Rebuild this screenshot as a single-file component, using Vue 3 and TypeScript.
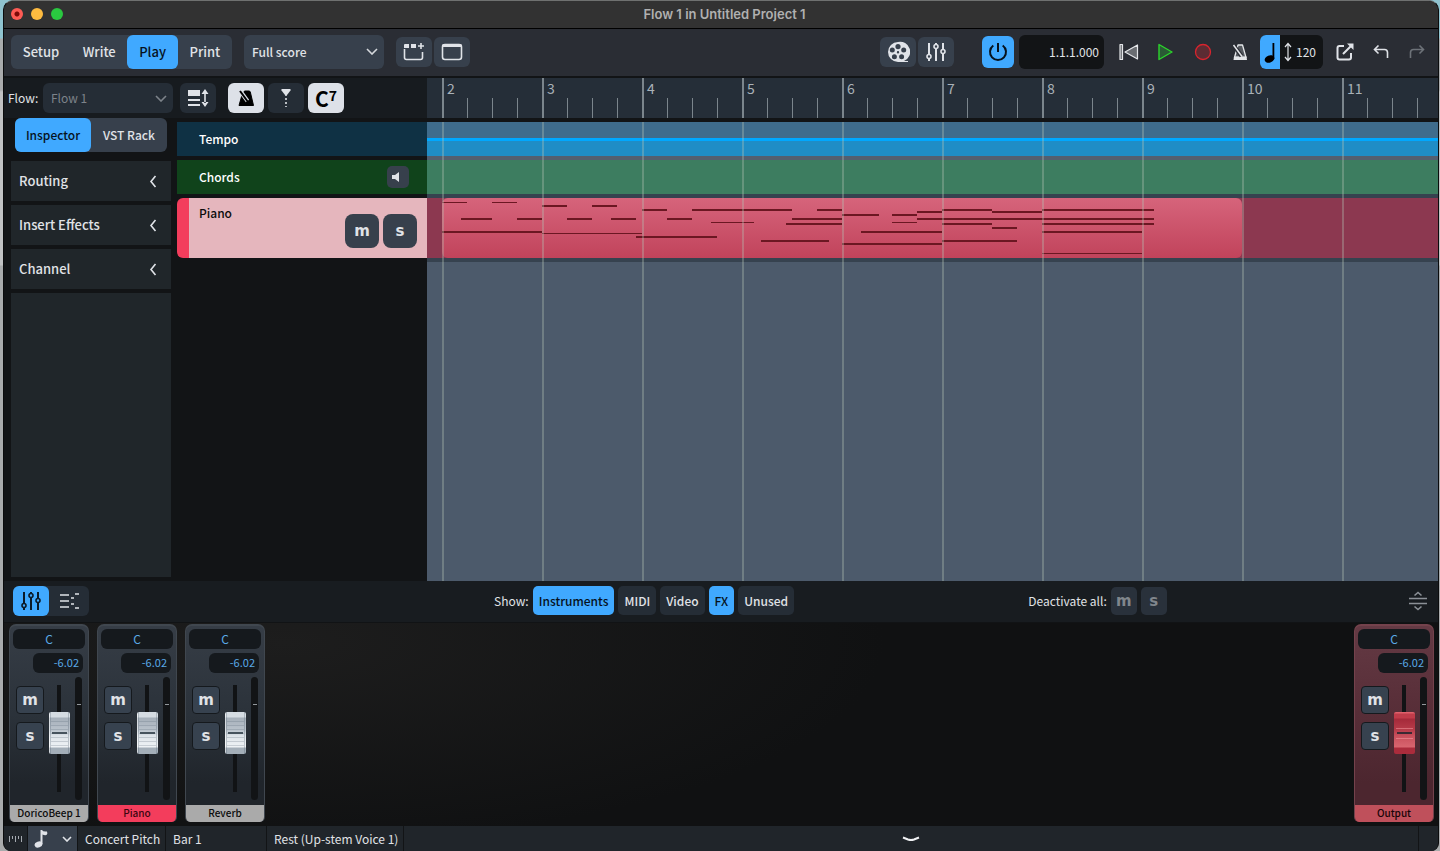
<script setup lang="ts">
import { ref } from 'vue'

interface Note { x: number; w: number; y: number; h?: number }
interface Channel { name: string; pan: string; gain: string; level: number; tone: string }

const modes = ['Setup', 'Write', 'Play', 'Print']
const mode = ref('Play')
const layout = ref('Full score')
const flow = ref('Flow 1')
const panel = ref('Inspector')
const sections = ['Routing', 'Insert Effects', 'Channel']
const bars = [2, 3, 4, 5, 6, 7, 8, 9, 10, 11]
const filters = ref([
  { name: 'Instruments', on: true },
  { name: 'MIDI', on: false },
  { name: 'Video', on: false },
  { name: 'FX', on: true },
  { name: 'Unused', on: false },
])
const channels = ref<Channel[]>([
  { name: 'DoricoBeep 1', pan: 'C', gain: '-6.02', level: 58, tone: 'grey' },
  { name: 'Piano', pan: 'C', gain: '-6.02', level: 58, tone: 'piano' },
  { name: 'Reverb', pan: 'C', gain: '-6.02', level: 58, tone: 'grey' },
  { name: 'Output', pan: 'C', gain: '-6.02', level: 58, tone: 'output' },
])
const notes: Note[] = [
  { x: 0, w: 25, y: 4, h: 1 }, { x: 50, w: 25, y: 4, h: 1 },
  { x: 100, w: 25, y: 7 }, { x: 150, w: 25, y: 7 },
  { x: 200, w: 25, y: 11 }, { x: 250, w: 100, y: 11 }, { x: 375, w: 25, y: 11 },
  { x: 19, w: 31, y: 20 }, { x: 75, w: 25, y: 20 }, { x: 125, w: 25, y: 20 },
  { x: 169, w: 25, y: 20 }, { x: 225, w: 25, y: 20 }, { x: 350, w: 50, y: 20 },
  { x: 269, w: 43, y: 24, h: 1 }, { x: 344, w: 56, y: 25 },
  { x: 0, w: 100, y: 33 }, { x: 100, w: 100, y: 35, h: 1 },
  { x: 194, w: 81, y: 38 }, { x: 319, w: 68, y: 42 },
  { x: 400, w: 37, y: 16 }, { x: 450, w: 25, y: 16 }, { x: 475, w: 25, y: 13 },
  { x: 500, w: 50, y: 11 }, { x: 550, w: 50, y: 13 }, { x: 600, w: 112, y: 11 },
  { x: 475, w: 237, y: 20 }, { x: 450, w: 25, y: 24, h: 1 },
  { x: 500, w: 50, y: 25 }, { x: 600, w: 112, y: 25 }, { x: 550, w: 25, y: 29 },
  { x: 419, w: 81, y: 33 }, { x: 600, w: 100, y: 33 },
  { x: 500, w: 75, y: 42 }, { x: 400, w: 100, y: 45 }, { x: 600, w: 100, y: 55, h: 1 },
]
</script>

<template>
  <div class="desktop">
    <div class="window">
      <header class="titlebar">
        <div class="lights"><i class="close"></i><i class="min"></i><i class="max"></i></div>
        <h1>Flow 1 in Untitled Project 1</h1>
      </header>

      <div class="toolbar">
        <nav class="seg modes" aria-label="Mode">
          <button v-for="m in modes" :key="m" :class="{ on: m === mode }" @click="mode = m">{{ m }}</button>
        </nav>
        <div class="drop layout-drop">
          <select v-model="layout" aria-label="Layout"><option>Full score</option></select>
          <svg width="12" height="7" viewBox="0 0 12 7"><path d="M1 1l5 5 5-5" /></svg>
        </div>
        <div class="pair">
          <button class="tool" aria-label="New window">
            <svg width="24" height="20" viewBox="0 0 24 20"><path class="ln thin" d="M2.500 7v8.500q0 2 2 2h14q2 0 2-2V10" /><path class="fl" d="M2 3q0-1 1-1h4v4H2zM9 2h5v4H9z" /><path class="ln thin" d="M16 4h6M19 1v6" /></svg>
          </button>
          <button class="tool" aria-label="Show or hide tabs">
            <svg width="24" height="20" viewBox="0 0 24 20"><rect class="ln thin" x="2.500" y="2.500" width="19" height="15" rx="2.500" /><path class="fl" d="M2 5V4q0-2 2-2h16q2 0 2 2v1z" /></svg>
          </button>
        </div>
        <span class="grow"></span>
        <div class="pair">
          <button class="tool" aria-label="Video window">
            <svg width="24" height="24" viewBox="0 0 24 24">
              <path class="fl" fill-rule="evenodd" d="M12 2a10 10 0 1 0 0 20h10v-1h-4A10 10 0 0 0 12 2zm0 2a2.600 2.600 0 1 1 0 5.200A2.600 2.600 0 0 1 12 4zM6.300 7.500a2.500 2.500 0 1 1 0 5 2.500 2.500 0 0 1 0-5zm11.400 0a2.500 2.500 0 1 1 0 5 2.500 2.500 0 0 1 0-5zM8.400 14.200a2.500 2.500 0 1 1 0 5 2.500 2.500 0 0 1 0-5zm7.200 0a2.500 2.500 0 1 1 0 5 2.500 2.500 0 0 1 0-5zM12 11a1.200 1.200 0 1 0 0 2.400A1.200 1.200 0 0 0 12 11z" />
            </svg>
          </button>
          <button class="tool" aria-label="Mixer window">
            <svg width="22" height="20" viewBox="0 0 22 20"><path class="ln" d="M4 1v11M4 17v2M11 1v1M11 7v12M18 1v6M18 12v7" /><circle class="ln thin" cx="4" cy="14.500" r="2" /><circle class="ln thin" cx="11" cy="4.500" r="2" /><circle class="ln thin" cx="18" cy="9.500" r="2" /></svg>
          </button>
        </div>
        <button class="power" aria-label="Activate project">
          <svg width="20" height="20" viewBox="0 0 20 20"><path d="M5.300 3.500a8 8 0 1 0 9.400 0M10 1v9" /></svg>
        </button>
        <input class="position" value="1.1.1.000" aria-label="Playhead position">
        <div class="transport">
          <button aria-label="Rewind"><svg width="22" height="20" viewBox="0 0 22 20"><path fill="#6a6d72" stroke="#e4e6e9" stroke-width="1.200" stroke-linejoin="round" d="M2 2.500h2.500v15H2zM19.500 3v14L7 10z" /></svg></button>
          <button aria-label="Play"><svg width="22" height="20" viewBox="0 0 22 20"><path fill="#2a5a35" stroke="#2bd42b" stroke-width="1.400" stroke-linejoin="round" d="M4 2.500v15L17 10z" /></svg></button>
          <button aria-label="Record"><svg width="22" height="20" viewBox="0 0 22 20"><circle fill="#5c2c33" stroke="#d8242e" stroke-width="1.300" cx="11" cy="10" r="7.500" /></svg></button>
          <button aria-label="Click"><svg width="22" height="20" viewBox="0 0 22 20"><path fill="#55595f" stroke="#e4e6e9" stroke-width="1.300" stroke-linejoin="round" d="M9 3h4.500L17 15.500H5.500z" /><path fill="#e4e6e9" d="M5 14.500h12.500L18 18H4.500z" /><path stroke="#2a2d34" stroke-width="4" d="M4 2.500l8.500 11.500" /><path stroke="#e4e6e9" stroke-width="1.500" d="M4.500 3l8.500 11.500" /></svg></button>
        </div>
        <div class="tempo">
          <button aria-label="Tempo mode"><svg width="20" height="34" viewBox="0 0 20 34"><ellipse cx="9.500" cy="24" rx="5" ry="3.600" transform="rotate(-22 9.500 24)" /><path d="M12.500 8h1.800v16h-1.800z" /></svg></button>
          <svg width="10" height="20" viewBox="0 0 10 20"><path class="ln hair" d="M5 2v16M2 5l3-3.500L8 5M2 15l3 3.500L8 15" /></svg>
          <input value="120" aria-label="Tempo">
        </div>
        <div class="history">
          <button aria-label="Export"><svg width="20" height="20" viewBox="0 0 20 20"><path class="ln" d="M9 4H4.500Q2.500 4 2.500 6v9.500q0 2 2 2H14q2 0 2-2V11M8 12l8-8" /><path class="fl" d="M12 1.500H18.500V8z" /></svg></button>
          <button aria-label="Undo"><svg width="20" height="20" viewBox="0 0 20 20"><path class="ln thin" d="M7.500 3.500L3.500 7.500l4 4M3.500 7.500h10q3 0 3 3V16" /></svg></button>
          <button aria-label="Redo" disabled><svg width="20" height="20" viewBox="0 0 20 20"><path class="ln thin dim" d="M12.500 3.500l4 4-4 4M16.500 7.500h-10q-3 0-3 3V16" /></svg></button>
        </div>
      </div>

      <main class="arrange">
        <div class="subbar">
          <label for="flow">Flow:</label>
          <div class="drop flow-drop">
            <select id="flow" v-model="flow" disabled><option>Flow 1</option></select>
            <svg width="12" height="7" viewBox="0 0 12 7"><path d="M1 1l5 5 5-5" /></svg>
          </div>
          <button class="tool dark" aria-label="Track height"><svg width="22" height="20" viewBox="0 0 22 20"><path class="fl" d="M1 2h12v6H1zM1 11h12v2H1zM1 16h12v2H1zM17.200 5h1.600v10h-1.600zM18 1l3.500 5h-7zM18 19l3.500-5h-7z" /></svg></button>
          <button class="tool lit first" aria-label="Show tempo track"><svg width="20" height="20" viewBox="0 0 20 20"><path stroke="#000" stroke-linejoin="round" d="M8.500 3h4.500q1 0 1.300 1L17.500 17.500H3L6 7z" /><path stroke="#dde1e8" stroke-width="4" fill="none" d="M3.500 2l8 11" /><path stroke="#000" stroke-width="2" d="M4 3l8 11" /></svg></button>
          <button class="tool dark" aria-label="Show markers"><svg width="20" height="20" viewBox="0 0 20 20"><path class="fl" d="M5.500 1h9v1.500L11 7H9L5.500 2.500z" /><path class="ln thin" stroke-dasharray="2 2" d="M10 6v13" /></svg></button>
          <button class="tool lit chord" aria-label="Show chords">C<sup>7</sup></button>
        </div>

        <aside class="inspector">
          <nav class="seg tabs" aria-label="Panel">
            <button v-for="p in ['Inspector', 'VST Rack']" :key="p" :class="{ on: p === panel }" @click="panel = p">{{ p }}</button>
          </nav>
          <button v-for="s in sections" :key="s" class="section">
            <span>{{ s }}</span>
            <svg width="8" height="13" viewBox="0 0 8 13"><path class="ln thin" d="M6.500 1L2 6.500 6.500 12" /></svg>
          </button>
          <div class="filler"></div>
        </aside>

        <div class="heads">
          <div class="head tempo-head">Tempo</div>
          <div class="head chord-head">Chords
            <button class="speaker" aria-label="Hear chords"><svg width="12" height="12" viewBox="0 0 12 12"><path class="fl" d="M0 4h3l4-3v10L3 8H0z" /></svg></button>
          </div>
          <div class="head piano-head">
            <span>Piano</span>
            <div class="ms"><button aria-label="Mute">m</button><button aria-label="Solo">s</button></div>
          </div>
        </div>

        <div class="timeline">
          <div class="ruler"><div v-for="b in bars" :key="b" class="bar">{{ b }}</div></div>
          <div class="lanes">
            <div class="lane tempo-lane"></div>
            <div class="lane chord-lane"></div>
            <div class="lane piano-lane">
              <svg class="clip" width="800" height="60" viewBox="0 0 800 60">
                <rect v-for="(n, i) in notes" :key="i" :x="n.x" :y="n.y" :width="n.w" :height="n.h ?? 2" />
              </svg>
            </div>
          </div>
        </div>
      </main>

      <section class="mixer">
        <div class="mixbar">
          <div class="views">
            <button class="on" aria-label="Mixer"><svg width="22" height="20" viewBox="0 0 22 20"><path class="ln blk" d="M4 1v11M4 17v2M11 1v1M11 7v12M18 1v6M18 12v7" /><circle class="ln blk thin" cx="4" cy="14.500" r="2" /><circle class="ln blk thin" cx="11" cy="4.500" r="2" /><circle class="ln blk thin" cx="18" cy="9.500" r="2" /></svg></button>
            <button aria-label="Key editor"><svg width="22" height="18" viewBox="0 0 22 18"><path class="ln thin" d="M2 3h9M2 9h9M2 15h9M17 2h4M13 6h3M13 12h3M17 16h4" /></svg></button>
          </div>
          <span class="s1"></span>
          <div class="filters">
            <span>Show:</span>
            <button v-for="f in filters" :key="f.name" :class="{ on: f.on }" @click="f.on = !f.on">{{ f.name }}</button>
          </div>
          <span class="s2"></span>
          <div class="deact"><span>Deactivate all:</span><button disabled aria-label="Mute off">m</button><button disabled aria-label="Solo off">s</button></div>
          <span class="s3"></span>
          <button class="resize" aria-label="Resize"><svg width="20" height="20" viewBox="0 0 20 20"><path fill="none" stroke="#8b9096" stroke-width="1.600" d="M1 7.500h18M1 12.500h18M6.500 4.500L10 1.500l3.500 3M6.500 15.500l3.500 3 3.500-3" /></svg></button>
        </div>
        <div class="strips">
          <article v-for="c in channels" :key="c.name" class="strip" :class="c.tone">
            <input class="pan" :value="c.pan" :aria-label="c.name + ' pan'">
            <input class="gain" :value="c.gain" :aria-label="c.name + ' gain'">
            <div class="controls">
              <div class="sm"><button aria-label="Mute">m</button><button aria-label="Solo">s</button></div>
              <input v-model="c.level" class="fader" type="range" min="0" max="100" :aria-label="c.name + ' level'">
              <div class="meter"></div>
            </div>
            <h2>{{ c.name }}</h2>
          </article>
        </div>
      </section>

      <footer class="status">
        <button class="midi" aria-label="MIDI input"><svg width="14" height="8" viewBox="0 0 14 8"><path stroke="#a5aab0" fill="none" d="M.5 1v6M3.500 1v3M6.500 1v6M9.500 1v3M12.500 1v6" /></svg></button>
        <button class="view" aria-label="View type">
          <svg width="14" height="20" viewBox="0 0 14 20"><ellipse class="fl" cx="4.500" cy="15.500" rx="4" ry="3" transform="rotate(-20 4.500 15.500)" /><path class="fl" d="M6.500 1H8q1 2 5 1.500 1 2-.5 3.500-2 .5-4-.5V15h-2z" /></svg>
          <svg width="10" height="6" viewBox="0 0 10 6"><path class="ln thin" d="M1 1l4 4 4-4" /></svg>
        </button>
        <span class="pitch">Concert Pitch</span>
        <span class="where">Bar 1</span>
        <span class="what">Rest (Up-stem Voice 1)</span>
        <span class="rest"><button aria-label="Hide lower zone"><svg width="18" height="6" viewBox="0 0 18 6"><path fill="none" stroke="#f0f2f4" stroke-width="2" d="M1 1.500l5 2q3 1 6 0l5-2" /></svg></button></span>
        <span class="end"></span>
      </footer>
    </div>
  </div>
</template>

<style>
body { margin: 0; background: #a5a7a8; }
</style>

<style scoped>
* { box-sizing: border-box; }
.desktop {
  display: flex;
  min-height: 100vh;
  padding: 0 1px 0 3px;
  background: linear-gradient(#8fc3cf 0 38px, #a9abac 39px 90px, #c0c1c2 92px 265px, #a9abac 266px);
  font: 500 13px/18px "Noto Sans CJK SC", "Open Sans", sans-serif;
  color: #e0e3e7;
}
button, input, select {
  margin: 0;
  padding: 0;
  border: 0;
  outline: 0;
  background: none;
  color: inherit;
  font: inherit;
}
button { display: flex; align-items: center; justify-content: center; flex: none; }
svg { display: block; flex: none; }
.ln { fill: none; stroke: #e0e3e8; stroke-width: 2; }
.thin { stroke-width: 1.600; }
.hair { stroke-width: 1.200; }
.blk { stroke: #0b1a28; }
.dim { stroke: #6d7278; }
.fl { fill: #e0e3e8; }
.window {
  display: flex;
  flex: 1;
  flex-direction: column;
  min-width: 0;
  overflow: hidden;
  border: 1px solid #0b0c0d;
  border-top-color: #6f7170;
  border-bottom: 0;
  border-radius: 10px 10px 8px 8px;
  background: #121416;
}
.titlebar {
  display: grid;
  grid-template-columns: 1fr auto 1fr;
  align-items: center;
  height: 28px;
  padding: 0 0 2px 7px;
  border-bottom: 1px solid #000;
  background: #323232;
}
.titlebar h1 { margin: 0; font: 600 13px/18px Inter, sans-serif; color: #b0b0b0; }
.lights { display: flex; gap: 8px; }
.lights i { width: 12px; height: 12px; border-radius: 50%; }
.close { background: radial-gradient(circle, #7d0a08 0 2px, #fe5b54 3px); }
.min { background: #febb40; }
.max { background: #2ac840; }
.toolbar {
  display: flex;
  align-items: center;
  height: 49px;
  padding: 0 11px 2px 7px;
  border-bottom: 2px solid #121416;
  background: #2a2d34;
}
.seg { display: flex; border-radius: 6px; background: #37404c; }
.seg button { height: 34px; border-radius: 6px; }
.on { background: #40a9ff; color: #06121d; }
.modes { width: 221px; margin-right: 12px; }
.modes button { flex: 1 1 auto; }
.drop { position: relative; display: flex; align-items: center; border-radius: 6px; background: #37404c; }
.drop select { width: 100%; height: 100%; padding: 0 24px 0 8px; appearance: none; opacity: 1; font-size: 12px; }
.drop svg { position: absolute; right: 6px; fill: none; stroke: #d5d8dc; stroke-width: 1.600; pointer-events: none; }
.layout-drop { width: 140px; height: 34px; margin-right: 12px; }
.pair { display: flex; gap: 2px; }
.tool { width: 36px; height: 30px; border-radius: 6px; background: #37404c; }
.grow { flex: 1; }
.power { width: 32px; height: 32px; margin: 0 5px 0 28px; border-radius: 6px; background: #40a9ff; }
.power svg { fill: none; stroke: #06121d; stroke-width: 2; }
.position { width: 85px; height: 34px; padding: 0 5px; border-radius: 6px; background: #121416; font-size: 12px; font-weight: 400; text-align: right; }
.transport { display: flex; gap: 15px; margin: 0 9px 0 14px; }
.tempo { display: flex; align-items: center; gap: 3px; width: 63px; height: 34px; overflow: hidden; border-radius: 6px; background: #121416; }
.tempo button { background: #40a9ff; }
.tempo input { width: 26px; font-size: 12px; font-weight: 400; }
.history { display: flex; gap: 16px; margin-left: 12px; }

.arrange {
  display: grid;
  flex: 1;
  grid-template: 40px 1fr / 173px 250px minmax(0, 1fr);
}
.subbar { display: flex; grid-column: 1 / 3; align-items: center; gap: 4px; padding-left: 4px; background: #171b1f; font-weight: 400; }
.subbar label { width: 31px; font-size: 12px; }
.flow-drop { width: 130px; height: 30px; margin-right: 3px; background: #252d36; color: #7d838a; }
.flow-drop svg { stroke: #7d838a; }
.dark { background: #252d36; }
.lit { background: #dde1e8; color: #000; }
.first { margin-left: 8px; }
.chord { font: 700 21px/30px "Noto Sans CJK SC", sans-serif; }
.chord sup { align-self: flex-start; font-size: 14px; line-height: 24px; }
.inspector { display: flex; flex-direction: column; gap: 4px; grid-column: 1; padding: 0 6px 4px 7px; }
.tabs { margin: 0 4px 5px; font-size: 12px; }
.tabs button { flex: 1; }
.section { justify-content: space-between; height: 40px; padding: 0 14px 0 8px; background: #20262a; }
.filler { flex: 1; background: #20262a; }
.heads { display: flex; flex-direction: column; gap: 4px; grid-column: 2; padding-top: 4px; font-size: 12px; }
.head { display: flex; align-items: center; justify-content: space-between; height: 34px; padding: 0 18px 0 22px; color: #fff; }
.tempo-head { background: #0f3144; }
.chord-head { background: #10431b; }
.speaker { width: 22px; height: 22px; border-radius: 5px; background: #37404c; }
.piano-head { align-items: flex-start; height: 60px; padding: 6px 10px 0 10px; border-left: 12px solid #f33d5c; border-radius: 6px 0 0 6px; background: #e5b6bd; color: #0c0c0c; }
.ms { display: flex; gap: 4px; margin-top: 10px; }
.ms button { width: 34px; height: 34px; border-radius: 8px; background: #37404c; }
.ms button, .sm button, .deact button { font: 700 15px/18px "DejaVu Sans", sans-serif; color: #e0e3e7; }

.timeline { display: flex; flex-direction: column; grid-row: 1 / 3; grid-column: 3; min-width: 0; overflow: hidden; }
.ruler { display: flex; height: 40px; padding-left: 15px; overflow: hidden; background: #252e38; }
.bar {
  flex: none;
  width: 100px;
  height: 40px;
  padding-left: 3px;
  border-left: 2px solid #7b858c;
  background: repeating-linear-gradient(90deg, transparent 0 23px, #7b858c 23px 24px, transparent 24px 25px) 0 20px / 76px 20px no-repeat;
  color: #aab2b8;
  font-size: 14px;
  font-weight: 400;
  line-height: 20px;
}
.lanes { position: relative; display: flex; flex: 1; flex-direction: column; margin-top: 4px; background: #4c5a6b; }
.lanes::after {
  content: "";
  position: absolute;
  inset: 0 0 0 15px;
  background: repeating-linear-gradient(90deg, rgba(180, 195, 180, .34) 0 2px, transparent 2px 100px);
  pointer-events: none;
}
.lane { flex: none; }
.tempo-lane { height: 38px; border-bottom: 4px solid #535f70; background: linear-gradient(#3f6c8c 0 16px, #00a8ff 16px 19px, #1f8dc6 19px); }
.chord-lane { height: 38px; border-bottom: 4px solid #36424f; background: #3d7d60; }
.piano-lane { height: 64px; padding-left: 15px; border-bottom: 4px solid #36424f; background: #8c3850; }
.clip { border-radius: 6px; background: linear-gradient(#d6647b, #c1435b); }
.clip rect { fill: #6b1722; }

.mixer { background: #101112; }
.mixbar { display: flex; align-items: center; height: 42px; padding: 0 10px 2px 9px; border-bottom: 1px solid #111315; background: #181c20; font-size: 12px; }
.views { display: flex; border-radius: 6px; background: #252d36; }
.views button { width: 40px; height: 30px; border-radius: 6px; }
.views .on { width: 36px; }
.s1 { flex: 408; }
.s2 { flex: 236; }
.s3 { flex: 243; }
.filters, .deact { display: flex; align-items: center; gap: 4px; font-weight: 400; }
.filters button { height: 29px; padding: 0 6px; border-radius: 5px; background: #252d36; font-weight: 500; }
.filters button.on { background: #40a9ff; color: #06121d; }
.deact button { width: 26px; height: 28px; border-radius: 5px; background: #29313b; color: #80868c; }
.strips { display: flex; gap: 8px; height: 203px; padding: 1px 4px 4px 5px; background: radial-gradient(ellipse 600px 200px at 280px 20px, #1d1d1d, #101112); }
.strip {
  display: flex;
  flex-direction: column;
  width: 80px;
  overflow: hidden;
  border: 2px solid #40474f;
  border-width: 2px 1px 0;
  border-radius: 7px 7px 5px 5px;
  background: linear-gradient(#363d46, #2b323a 45%, #20252b 80%);
}
.pan, .gain { height: 20px; border-radius: 6px; background: #15191d; color: #5aa9e6; font-size: 11px; line-height: 18px; font-weight: 400; }
.pan { width: 72px; margin: 3px 3px 4px; padding-bottom: 2px; font-size: 12px; text-align: center; }
.gain { width: 50px; margin-left: 23px; padding: 0 4px 2px 0; text-align: right; }
.controls { display: flex; flex: 1; padding: 4px 6px 5px 6px; }
.sm { display: flex; flex-direction: column; gap: 8px; margin: 9px 4px 0 0; }
.sm button { width: 28px; height: 28px; border: 1px solid #15191d; border-radius: 4px; background: #37424f; }
.fader {
  width: 22px;
  height: 107px;
  margin: 8px 5px 0 0;
  appearance: none;
  writing-mode: vertical-lr;
  direction: rtl;
  background: linear-gradient(#111315, #111315) center / 4px 100% no-repeat;
}
.fader::-webkit-slider-thumb {
  appearance: none;
  width: 21px;
  height: 42px;
  border-radius: 2px;
  background:
    linear-gradient(#46535d, #46535d) center / 15px 2px no-repeat,
    repeating-linear-gradient(transparent 0 3px, rgba(90, 105, 120, .25) 3px 4px) center / 17px 30px no-repeat,
    linear-gradient(90deg, rgba(255, 255, 255, .5) 0 1px, rgba(80, 95, 110, .3) 1px 2px, transparent 2px 19px, rgba(80, 95, 110, .3) 19px 20px, transparent 20px),
    linear-gradient(#d5dce2 0 5px, #a6b0ba 6px, #b9c2cb 18px, #dfe5ea 24px, #eef2f5 35px, #a3aeb8 36px);
}
.meter { width: 8px; border-radius: 4px; background: linear-gradient(#92979b, #92979b) center 27px / 4px 1px no-repeat, #121416; }
.strip h2 { height: 17px; margin: 0 -1px; background: #aaa; color: #0c0c0c; font-size: 10px; font-weight: 500; line-height: 16px; text-align: center; }
.piano h2 { background: #f33d5c; color: #3a0610; }
.output { margin-left: auto; border-color: #74424c; background: linear-gradient(#643a44, #5a303a 35%, #4c262f 80%); }
.output h2 { background: #bf505b; color: #180407; }
.output .fader::-webkit-slider-thumb {
  background:
    linear-gradient(#3b2a33, #3b2a33) center / 15px 2px no-repeat,
    repeating-linear-gradient(transparent 0 9px, rgba(255, 170, 175, .45) 9px 10px) center / 17px 28px no-repeat,
    linear-gradient(#e0606b 0 1px, #c03c4a 2px 6px, #a52a3a 7px, #b83c4a 18px, #c9505c 24px, #d8656f 35px, #ab2c3c 36px);
}

.status { display: flex; height: 25px; background: #20252a; font-size: 12px; font-weight: 400; line-height: 26px; }
.status > * { border-right: 1px solid #121416; }
.midi { width: 24px; }
.view { gap: 14px; width: 50px; background: #37404c; }
.pitch { width: 88px; padding-left: 7px; }
.where { width: 101px; padding-left: 7px; }
.what { width: 137px; padding-left: 7px; white-space: nowrap; }
.rest { display: flex; flex: 1; justify-content: center; }
.end { width: 19px; }
.status .end { border: 0; }
</style>
